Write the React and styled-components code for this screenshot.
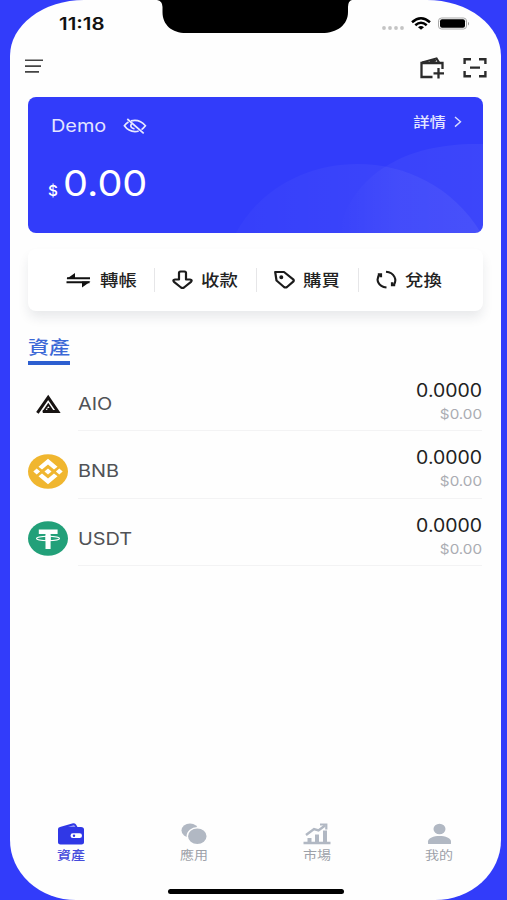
import React from 'react'
import styled, { createGlobalStyle } from 'styled-components'

const GlobalStyle = createGlobalStyle`
    * {
        box-sizing: border-box;
    }

    body {
        margin: 0;
        background: #323cfa;
        font-family: Inter, "Noto Sans CJK TC", sans-serif;
    }

    svg {
        display: block;
        flex: none;
    }
`

const Screen = styled.div`
    width: 491px;
    height: 900px;
    margin-left: 10px;
    display: flex;
    flex-direction: column;
    overflow: hidden;
    background: #fefefe;
    border-radius: 74px 74px 66px 66px / 56px 56px 60px 60px;
`

/* The interface type is wider than Inter, so every label is stretched */
const Text = styled.span`
    display: block;
    flex: none;
    white-space: nowrap;
    font-size: ${({ $size }) => $size}px;
    font-weight: ${({ $weight }) => $weight || 400};
    line-height: ${({ $line }) => $line || 20}px;
    color: ${({ $color }) => $color || '#222'};
    transform: scaleX(${({ $stretch }) => $stretch || 1.17});
    transform-origin: ${({ $origin }) => $origin || 'left'} center;
`

const StatusBar = styled.header`
    height: 48px;
    display: flex;
    padding-left: 49px;
`

const Clock = styled.div`
    width: 98px;
    padding-top: 14px;
`

const StatusIcons = styled.div`
    padding: 16px 0 0 28px;
`

const Toolbar = styled.div`
    height: 49px;
    display: flex;
    align-items: flex-start;
    justify-content: space-between;
    padding: 7px 14px 0 15px;
`

const ToolbarIcons = styled.div`
    display: flex;
    gap: 18px;
`

const BalanceCard = styled.section`
    position: relative;
    flex: none;
    height: 136px;
    margin: 0 18px;
    padding: 15px 21px 0 20px;
    overflow: hidden;
    border-radius: 8px;
    background: #323cfa;
`

const CardWaves = styled.svg`
    position: absolute;
    inset: 0;
`

const CardHead = styled.div`
    position: relative;
    display: flex;
    justify-content: space-between;
    padding-left: 3px;
`

const Account = styled.div`
    display: flex;
    gap: 25px;
    padding-top: 4px;
`

const Details = styled.div`
    display: flex;
    gap: 8px;
`

const Balance = styled.div`
    position: relative;
    display: flex;
    align-items: baseline;
    gap: 5px;
    padding-top: 26px;
`

const Actions = styled.nav`
    flex: none;
    height: 62px;
    margin: 16px 18px 0;
    padding: 0 20px 0 24px;
    display: flex;
    align-items: center;
    border-radius: 8px;
    background: #fff;
    box-shadow: 0 7px 12px -1px rgba(30, 35, 60, .1);
`

const Action = styled.div`
    width: 102px;
    height: 24px;
    display: flex;
    align-items: center;
    gap: ${({ $first }) => ($first ? 9 : 8)}px;
    padding-left: ${({ $first }) => ($first ? 14 : 17)}px;
    border-left: ${({ $first }) => ($first ? 0 : 1)}px solid #e6e6e8;
`

const SectionTitle = styled.h2`
    flex: none;
    width: 42px;
    height: 30px;
    margin: 24px 0 0 18px;
    padding-top: 3px;
    border-bottom: 4px solid #2d5fd0;
`

const AssetList = styled.ul`
    flex: 1;
    margin: -1px 0 0;
    padding: 0 19px 0 18px;
    list-style: none;
`

const AssetRow = styled.li`
    height: 67.3px;
    display: flex;
    align-items: center;
    gap: 10px;
    padding-top: 13px;
`

const AssetBody = styled.div`
    flex: 1;
    height: 100%;
    display: flex;
    align-items: center;
    justify-content: space-between;
    padding-top: 1px;
    border-bottom: 1px solid #f3f3f4;
`

const Amounts = styled.div`
    display: flex;
    flex-direction: column;
    align-items: flex-end;
    gap: 3px;
    padding-bottom: 3px;
`

const TabBar = styled.nav`
    height: 66px;
    display: grid;
    grid-template-columns: repeat(4, 122.7px);
`

const Tab = styled.div`
    display: flex;
    flex-direction: column;
    align-items: center;
    gap: 1px;
`

const HomeIndicator = styled.div`
    flex: none;
    width: 176px;
    height: 5px;
    margin: 0 auto 6px 158px;
    border-radius: 3px;
    background: #000;
`

const Notch = () => (
    <svg width="196" height="34" viewBox="0 0 196 34">
        <path d="M0 0Q5.5 1 5.5 7V12C5.5 25 15 33 29 33H165C180 33 191 25 191 12V7Q191 1 195 0Z" fill="#000" />
    </svg>
)

const SignalIcons = () => (
    <svg width="88" height="16" viewBox="0 0 88 16">
        <g fill="#c4c4c4">
            <circle cx="3" cy="12" r="1.9" />
            <circle cx="9" cy="12" r="1.9" />
            <circle cx="15" cy="12" r="1.9" />
            <circle cx="21" cy="12" r="1.9" />
        </g>
        <g fill="none" stroke="#000" strokeWidth="2.5">
            <path d="M31 6.2Q40 -1.8 49 6.2" />
            <path d="M34.3 9.3Q40 4.3 45.7 9.3" />
        </g>
        <path d="M37 11.2Q40 8.9 43 11.2L40 13.8Z" />
        <rect x="57.5" y="2" width="28" height="11" rx="3" fill="none" stroke="#aaa" />
        <rect x="59" y="3.2" width="25" height="8.6" rx="2" />
        <path d="M87 6V9.5Q88 9 88 7.7T87 6" fill="#999" />
    </svg>
)

const MenuIcon = () => (
    <svg width="18" height="22" viewBox="0 0 18 22" stroke="#444" strokeWidth="1.6">
        <path d="M0 5.3H18M0 11.1H16M0 16.9H14" />
    </svg>
)

const AddWalletIcon = () => (
    <svg width="27" height="24" viewBox="0 0 27 24" fill="none" stroke="#2b2b2b" strokeWidth="2.3">
        <path d="M14.5 22H3.5V8H24.5V14" />
        <path d="M4 7.5L18.5 3.5L21 7.5M12 7L18 5.5" />
        <path d="M20.5 13V23.5M15.5 18.3H26" />
    </svg>
)

const ScanIcon = () => (
    <svg width="24" height="24" viewBox="0 0 24 24" fill="none" stroke="#2b2b2b" strokeWidth="2.4">
        <path d="M1.6 9V4.2H8M16 4.2H22.4V9M22.4 16V21.2H16M8 21.2H1.6V16" />
        <path d="M7 12.6H17" />
    </svg>
)

const HiddenIcon = () => (
    <svg width="24" height="20" viewBox="0 0 24 20" fill="none" stroke="#e7e9ff" strokeWidth="1.7">
        <path d="M5.5 6Q3 7.500 1.400 9.800Q5.500 15.600 12 15.600Q14 15.600 15.700 15" />
        <path d="M8 4.900Q16.500 2.700 22.400 9.800Q20.500 12.300 18.500 13.600" />
        <path d="M8.300 7.800Q6.500 12 11.500 12.800M4.300 3L20.700 17.300" />
    </svg>
)

const ChevronIcon = () => (
    <svg width="8" height="20" viewBox="0 0 8 20" fill="none" stroke="#d9dcff" strokeWidth="1.4">
        <path d="M1 5L6.5 9.8L1 14.6" />
    </svg>
)

const TransferIcon = () => (
    <svg width="25" height="20" viewBox="0 0 25 20">
        <path d="M1 8.2H24M.5 12.3H23.5" stroke="#111" strokeWidth="1.9" />
        <path d="M.5 9.1L9 3V9.1ZM24.5 11.5L16 17.4V11.5Z" fill="#111" />
    </svg>
)

const ReceiveIcon = () => (
    <svg width="21" height="20" viewBox="0 0 21 20" fill="none" stroke="#1b1b1b" strokeWidth="2.2" strokeLinejoin="round">
        <path d="M7 3Q7 1.5 8.5 1.5H12.5Q14 1.5 14 3V9.5H18Q20.6 9.8 19 11.8L12 17.5Q10.5 18.5 9 17.5L2 11.8Q.4 9.8 3 9.5H7Z" />
    </svg>
)

const TagIcon = () => (
    <svg width="21" height="20" viewBox="0 0 21 20" fill="none" stroke="#1b1b1b" strokeWidth="2.2" strokeLinejoin="round">
        <path d="M1.2 2H10L19.2 9.3Q20.3 10.5 19.2 11.7L13 17Q11.5 18 10 17L2.5 10.5Z" />
        <circle cx="7.3" cy="7.3" r="1.3" fill="#1b1b1b" strokeWidth="1.4" />
    </svg>
)

const SwapIcon = () => (
    <svg width="21" height="20" viewBox="0 0 21 20" fill="none" stroke="#1b1b1b" strokeWidth="2.1">
        <path d="M3.5 4.5C-.5 9.5 2 16.5 10.5 17.5M10 1.8C18.5 2.5 21.5 10 17.5 15.5" />
        <path d="M1.8 4.5H4.8V7.3M19.200 15H16.200V12.300" strokeWidth="2.6" />
    </svg>
)

const AioIcon = () => (
    <svg width="40" height="35" viewBox="0 0 40 35" fill="none" stroke="#171312">
        <path d="M9.4 25.8L20.2 10.4L29.8 24.5H14.8" strokeWidth="3" />
        <path d="M15.200 25L20.300 17.400L23.400 22H19.300" strokeWidth="1.900" />
    </svg>
)

const BnbIcon = () => (
    <svg width="40" height="35" viewBox="0 0 40 35">
        <ellipse cx="20" cy="17.5" rx="20" ry="17.2" fill="#f0b62f" />
        <g fill="#fff">
            <path d="M20 4.7L29.5 12.7L26 15.6L20 10.6L14 15.6L10.5 12.7Z" />
            <path d="M20 30.3L29.5 22.3L26 19.4L20 24.4L14 19.4L10.5 22.3Z" />
            <path d="M20 14.5L23.5 17.5L20 20.5L16.5 17.5Z" />
            <path d="M8.7 14.6L12.1 17.5L8.7 20.4L5.3 17.5ZM31.3 14.6L34.7 17.5L31.3 20.4L27.9 17.5Z" />
        </g>
    </svg>
)

const UsdtIcon = () => (
    <svg width="40" height="35" viewBox="0 0 40 35">
        <ellipse cx="20" cy="17.5" rx="20" ry="17.2" fill="#22a079" />
        <path d="M10.8 8.500H29.6V13H22.6V28H17.5V13H10.8Z" fill="#fff" />
        <ellipse cx="20" cy="17.5" rx="11.5" ry="2.2" fill="none" stroke="#fff" strokeWidth="1.1" />
        <path d="M17.5 14.5H22.6V19.5H17.5Z" fill="#fff" />
    </svg>
)

const WalletIcon = () => (
    <svg width="28" height="22" viewBox="0 0 28 22">
        <path d="M3 4L16 .3Q18 0 19 1.5L20.5 4H24Q27 4 27 6.5V19.5Q27 21.5 24.5 21.5H3.5Q1 21.5 1 19.5V6Q1 4.5 3 4Z" fill="#3038e6" />
        <path d="M11 4L17 2L18.5 4Z" fill="#8e94f5" />
        <rect x="13.5" y="10.3" width="11.5" height="4.8" rx="2.4" fill="#fff" />
        <circle cx="17" cy="12.7" r="1.2" fill="#3038e6" />
    </svg>
)

const AppsIcon = () => (
    <svg width="28" height="22" viewBox="0 0 28 22">
        <ellipse cx="10" cy="7.5" rx="8.5" ry="7" fill="#b1b8c3" />
        <ellipse cx="17.3" cy="13.3" rx="10" ry="8.5" fill="#b1b8c3" stroke="#fefefe" strokeWidth="1.5" />
    </svg>
)

const MarketIcon = () => (
    <svg width="28" height="22" viewBox="0 0 28 22" fill="none" stroke="#b1b8c3">
        <path d="M.5 20H27.5" strokeWidth="2.4" />
        <path d="M6.5 20V15M14 20V11.5M22 20V7.5" strokeWidth="4" />
        <path d="M3 12L11 6L15.5 7.5L22 2.5" strokeWidth="2.4" />
        <path d="M17 1.5H23.3V6.5" strokeWidth="2.2" />
    </svg>
)

const ProfileIcon = () => (
    <svg width="28" height="22" viewBox="0 0 28 22" fill="#b1b8c3">
        <ellipse cx="14.5" cy="6" rx="6" ry="5.3" />
        <path d="M3 20.5V18.5C3 11 26 11 26 18.5V20.5Q26 21 25 21H4Q3 21 3 20.5Z" />
    </svg>
)

const actions = [
    { name: '轉帳', Icon: TransferIcon },
    { name: '收款', Icon: ReceiveIcon },
    { name: '購買', Icon: TagIcon },
    { name: '兌換', Icon: SwapIcon },
]

const assets = [
    { name: 'AIO', Icon: AioIcon },
    { name: 'BNB', Icon: BnbIcon },
    { name: 'USDT', Icon: UsdtIcon },
]

const tabs = [
    { name: '資產', Icon: WalletIcon, active: true },
    { name: '應用', Icon: AppsIcon },
    { name: '市場', Icon: MarketIcon },
    { name: '我的', Icon: ProfileIcon },
]

const App = () => {

  return (
    <>
        <GlobalStyle />
        <Screen>
            <StatusBar>
                <Clock><Text $size={17} $weight={600} $color="#111" $stretch={1.2}>11:18</Text></Clock>
                <Notch />
                <StatusIcons><SignalIcons /></StatusIcons>
            </StatusBar>
            <Toolbar>
                <MenuIcon />
                <ToolbarIcons><AddWalletIcon /><ScanIcon /></ToolbarIcons>
            </Toolbar>
            <BalanceCard>
                <CardWaves width="455" height="136" viewBox="0 0 455 136">
                    <defs>
                        <linearGradient id="leftWave" x1="0" y1="0" x2="1" y2="0">
                            <stop offset="0" stopColor="#fff" stopOpacity=".02" />
                            <stop offset="1" stopColor="#fff" stopOpacity=".06" />
                        </linearGradient>
                        <linearGradient id="rightWave" x1="0" y1="0" x2="1" y2="0">
                            <stop offset="0" stopColor="#fff" stopOpacity="0" />
                            <stop offset=".4" stopColor="#fff" stopOpacity=".04" />
                            <stop offset="1" stopColor="#fff" stopOpacity=".05" />
                        </linearGradient>
                    </defs>
                    <path d="M208 136C255 48 395 40 453 136Z" fill="url(#leftWave)" />
                    <path d="M310 136C325 75 380 45 455 47V136Z" fill="url(#rightWave)" />
                </CardWaves>
                <CardHead>
                    <Account>
                        <Text $size={17} $color="#e3e5ff">Demo</Text>
                        <HiddenIcon />
                    </Account>
                    <Details>
                        <Text $size={14} $weight={500} $color="#e3e5ff" $origin="right">詳情</Text>
                        <ChevronIcon />
                    </Details>
                </CardHead>
                <Balance>
                    <Text $size={15} $weight={500} $color="#fff" $stretch={1.02}>$</Text>
                    <Text $size={36} $color="#fff" $line={42} $stretch={1.1}>0.00</Text>
                </Balance>
            </BalanceCard>
            <Actions>
                {actions.map(({ name, Icon }, i) => (
                    <Action key={name} $first={i === 0}>
                        <Icon />
                        <Text $size={16} $weight={500} $stretch={1.15}>{name}</Text>
                    </Action>
                ))}
            </Actions>
            <SectionTitle><Text $size={18} $weight={500} $color="#3c68d6">資產</Text></SectionTitle>
            <AssetList>
                {assets.map(({ name, Icon }) => (
                    <AssetRow key={name}>
                        <Icon />
                        <AssetBody>
                            <Text $size={17} $color="#505256">{name}</Text>
                            <Amounts>
                                <Text $size={18} $stretch={1.08} $origin="right">0.0000</Text>
                                <Text $size={13} $color="#aaacb2" $origin="right">$0.00</Text>
                            </Amounts>
                        </AssetBody>
                    </AssetRow>
                ))}
            </AssetList>
            <TabBar>
                {tabs.map(({ name, Icon, active }) => (
                    <Tab key={name}>
                        <Icon />
                        <Text $size={12} $weight={active ? 500 : 400} $color={active ? '#454bdc' : '#9da1a9'} $origin="center">{name}</Text>
                    </Tab>
                ))}
            </TabBar>
            <HomeIndicator />
        </Screen>
    </>
  )
}

export default App
